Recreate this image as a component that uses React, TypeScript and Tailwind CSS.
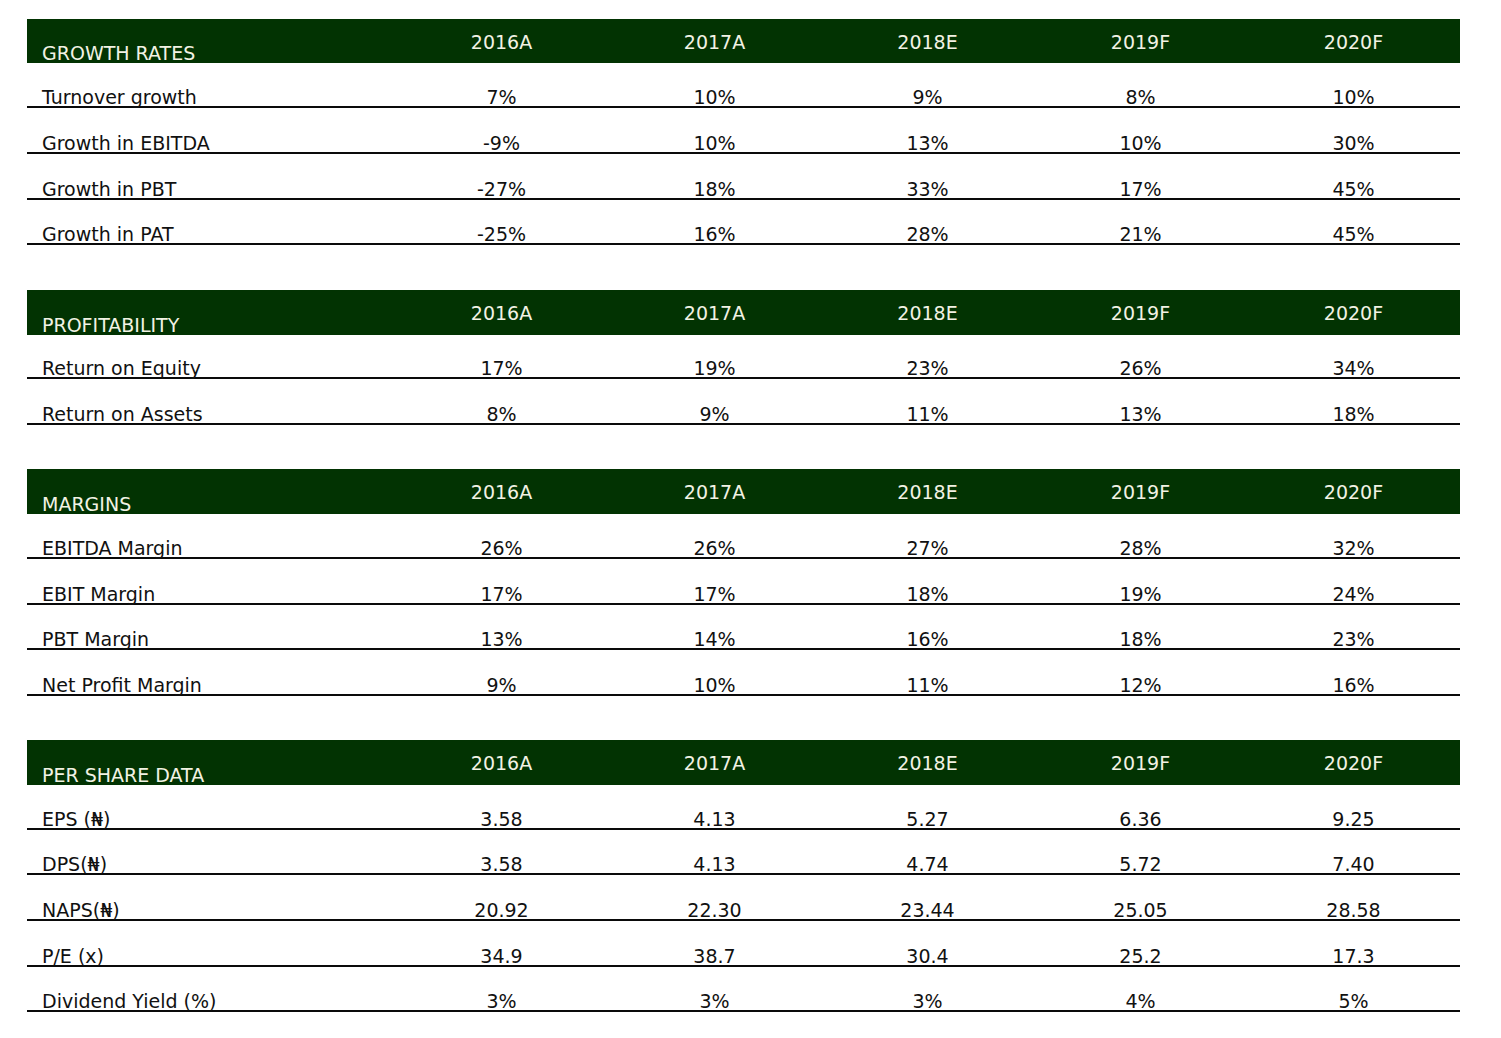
import React from "react";

type Row = { label: string; values: string[]; h: string };
type Section = { title: string; h: string; rows: Row[]; blank?: string };

const YEARS = ["2016A", "2017A", "2018E", "2019F", "2020F"];

const SECTIONS: Section[] = [
  {
    title: "GROWTH RATES",
    h: "h-[44px]",
    blank: "h-[45px]",
    rows: [
      { label: "Turnover growth", values: ["7%", "10%", "9%", "8%", "10%"], h: "h-[45px]" },
      { label: "Growth in EBITDA", values: ["-9%", "10%", "13%", "10%", "30%"], h: "h-[46px]" },
      { label: "Growth in PBT", values: ["-27%", "18%", "33%", "17%", "45%"], h: "h-[46px]" },
      { label: "Growth in PAT", values: ["-25%", "16%", "28%", "21%", "45%"], h: "h-[45px]" },
    ],
  },
  {
    title: "PROFITABILITY",
    h: "h-[45px]",
    blank: "h-[44px]",
    rows: [
      { label: "Return on Equity", values: ["17%", "19%", "23%", "26%", "34%"], h: "h-[44px]" },
      { label: "Return on Assets", values: ["8%", "9%", "11%", "13%", "18%"], h: "h-[46px]" },
    ],
  },
  {
    title: "MARGINS",
    h: "h-[45px]",
    blank: "h-[44px]",
    rows: [
      { label: "EBITDA Margin", values: ["26%", "26%", "27%", "28%", "32%"], h: "h-[45px]" },
      { label: "EBIT Margin", values: ["17%", "17%", "18%", "19%", "24%"], h: "h-[46px]" },
      { label: "PBT Margin", values: ["13%", "14%", "16%", "18%", "23%"], h: "h-[45px]" },
      { label: "Net Profit Margin", values: ["9%", "10%", "11%", "12%", "16%"], h: "h-[46px]" },
    ],
  },
  {
    title: "PER SHARE DATA",
    h: "h-[45px]",
    rows: [
      { label: "EPS (\u20A6)", values: ["3.58", "4.13", "5.27", "6.36", "9.25"], h: "h-[45px]" },
      { label: "DPS(\u20A6)", values: ["3.58", "4.13", "4.74", "5.72", "7.40"], h: "h-[45px]" },
      { label: "NAPS(\u20A6)", values: ["20.92", "22.30", "23.44", "25.05", "28.58"], h: "h-[46px]" },
      { label: "P/E (x)", values: ["34.9", "38.7", "30.4", "25.2", "17.3"], h: "h-[46px]" },
      { label: "Dividend Yield (%)", values: ["3%", "3%", "3%", "4%", "5%"], h: "h-[45px]" },
    ],
  },
];

function Header({ title, h }: { title: string; h: string }) {
  return (
    <div className={`grid grid-cols-[368px_repeat(5,213px)] ${h} bg-[#023302] text-[#f2f2e4]`}>
      <div className="self-end pl-[15px] pb-[3px] leading-[14px] whitespace-nowrap">{title}</div>
      {YEARS.map((y) => (
        <div key={y} className="self-start pt-[16px] text-center leading-[14px]">
          {y}
        </div>
      ))}
    </div>
  );
}

function DataRow({ row }: { row: Row }) {
  return (
    <div className={`grid grid-cols-[368px_repeat(5,213px)] ${row.h} border-b-2 border-[#0a0a0a] text-[#111111]`}>
      <div className="self-end pl-[15px] pb-[2px] leading-[14px] whitespace-nowrap">{row.label}</div>
      {row.values.map((v, i) => (
        <div key={i} className="self-end pb-[2px] text-center leading-[14px]">
          {v}
        </div>
      ))}
    </div>
  );
}

export default function App() {
  return (
    <div
      className="min-h-[1038px] w-[1501px] bg-white pt-[19px] text-[19px]"
      style={{ fontFamily: '"DejaVu Sans", Verdana, sans-serif' }}
    >
      <div className="ml-[27px] flex w-[1433px] flex-col">
        {SECTIONS.map((s) => (
          <div key={s.title} className="flex flex-col">
            <Header title={s.title} h={s.h} />
            {s.rows.map((r) => (
              <DataRow key={r.label} row={r} />
            ))}
            {s.blank ? <div className={s.blank} /> : null}
          </div>
        ))}
      </div>
    </div>
  );
}
